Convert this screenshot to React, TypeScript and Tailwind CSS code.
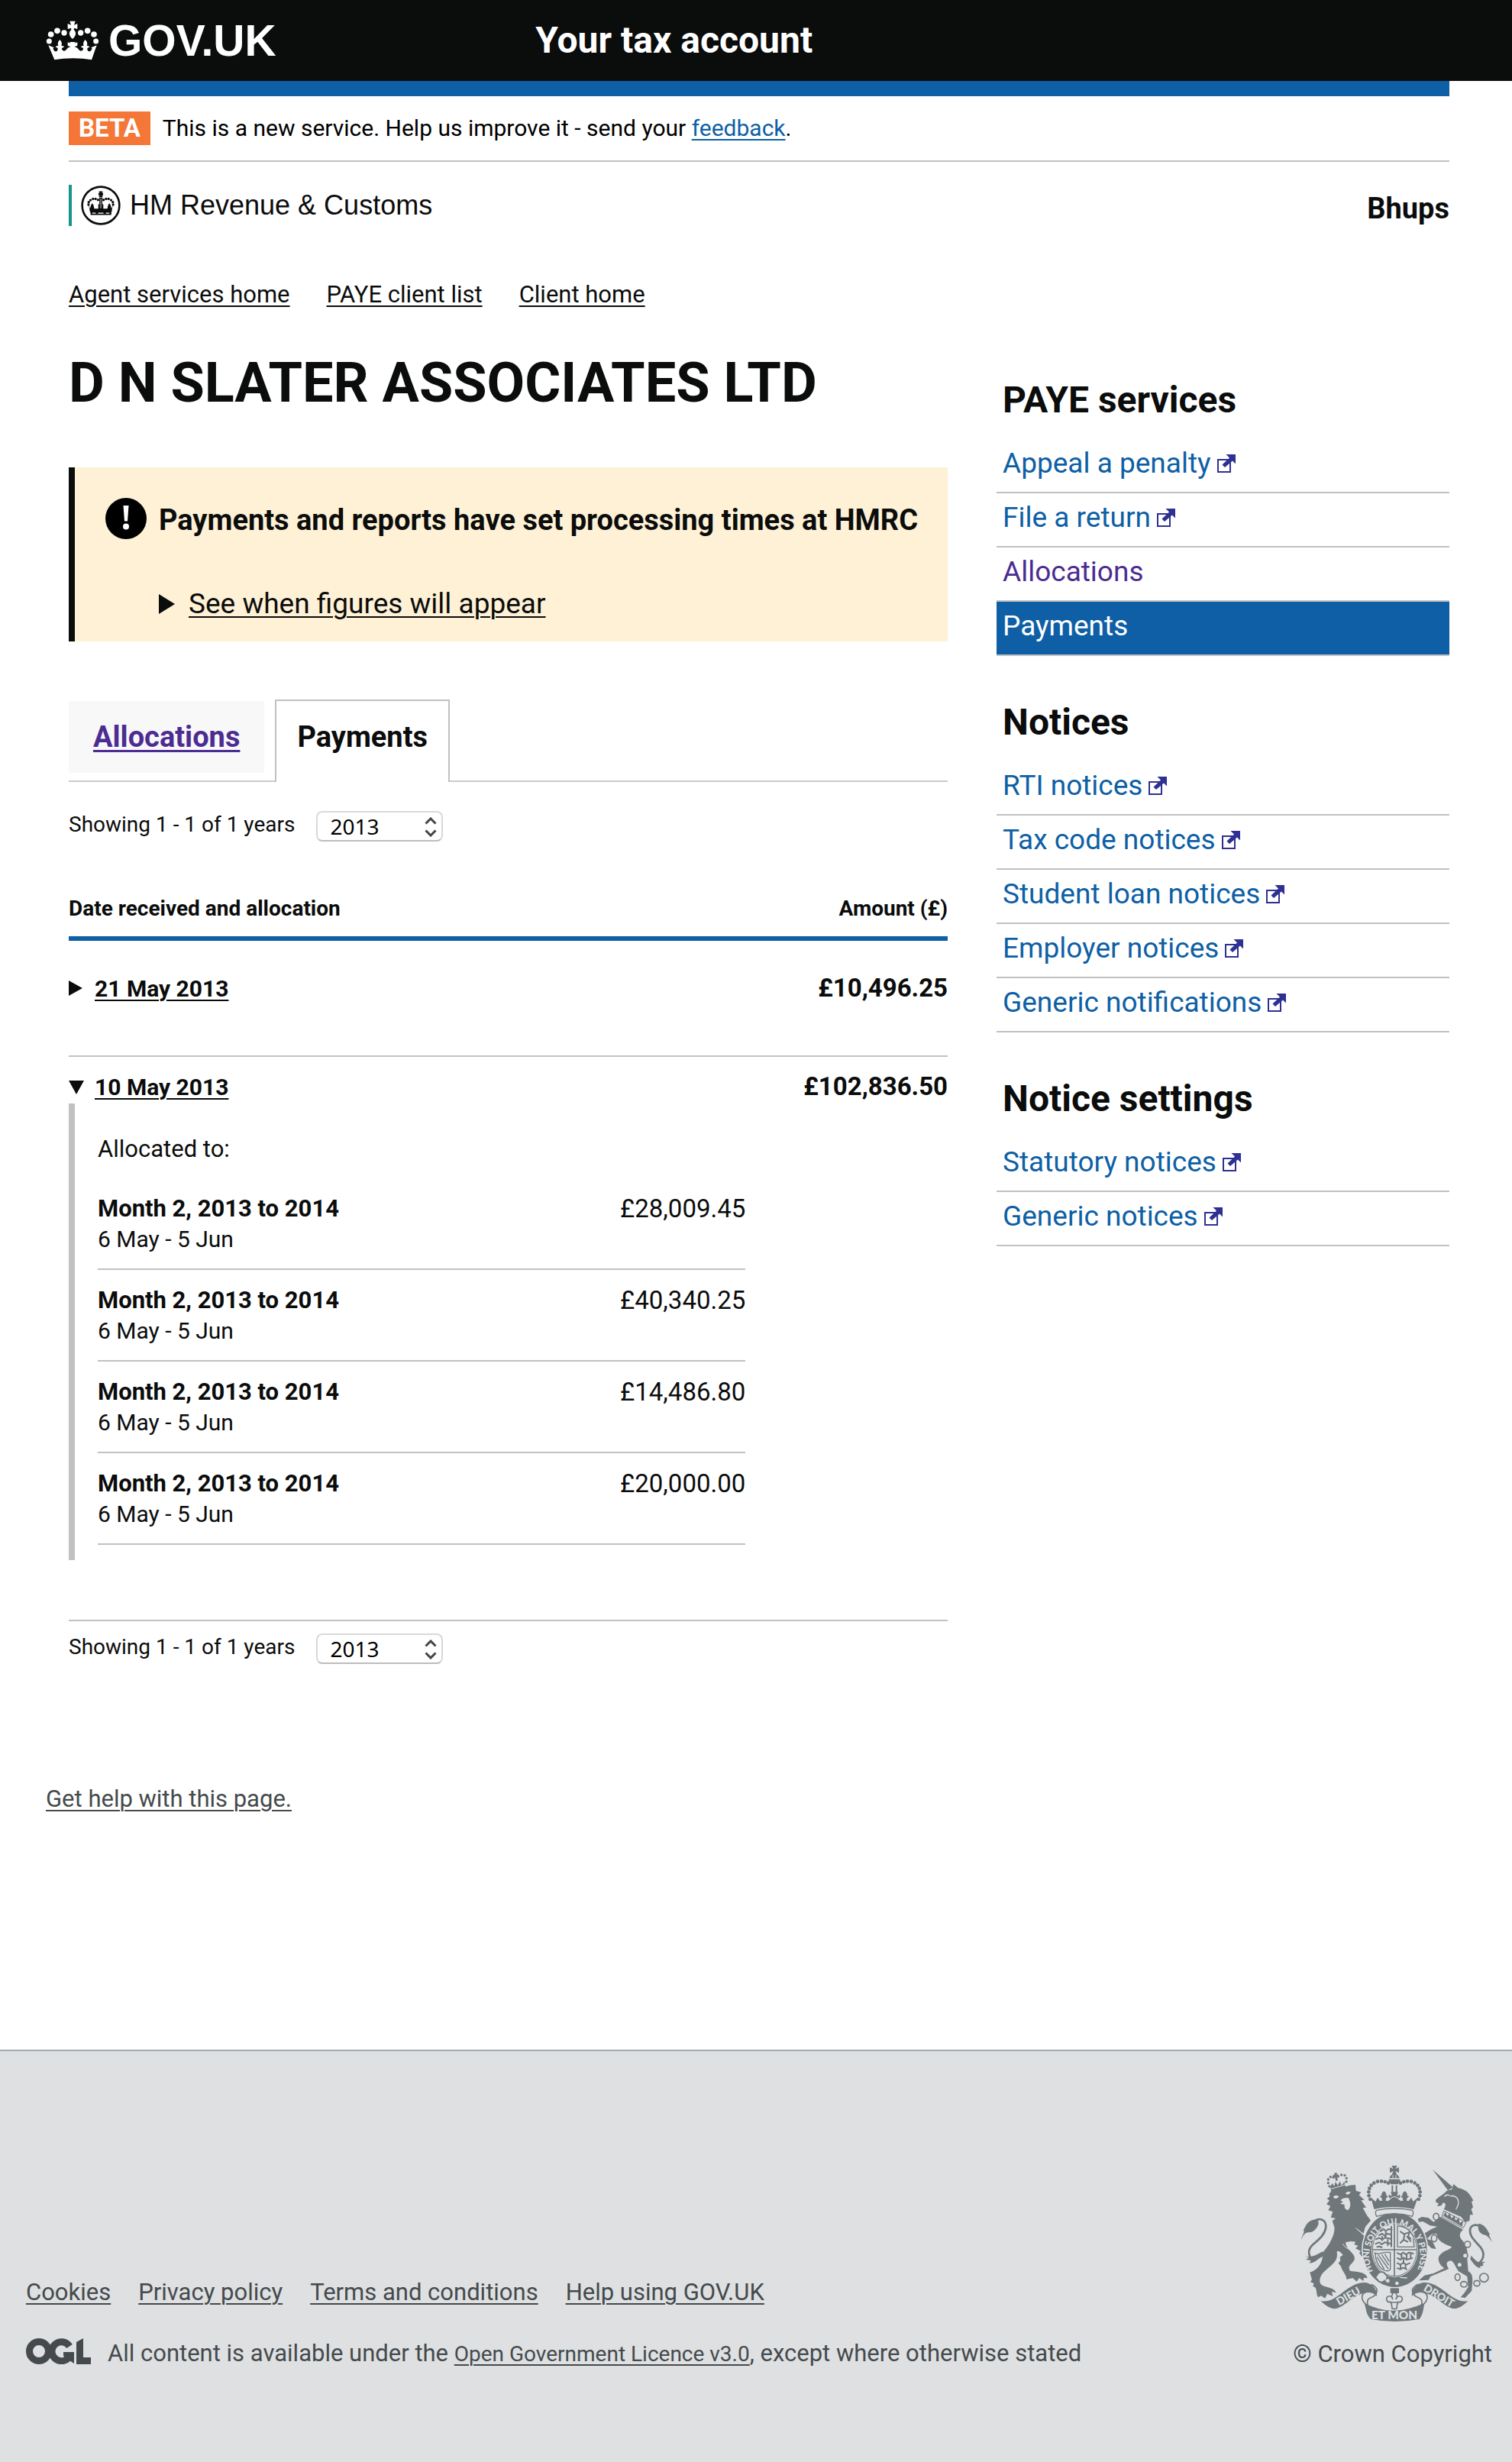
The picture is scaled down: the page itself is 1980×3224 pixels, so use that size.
import React from "react";

type NavItem = { label: string; external?: boolean; visited?: boolean; current?: boolean };

const SERVICE_GROUPS: { title: string; items: NavItem[] }[] = [
  {
    title: "PAYE services",
    items: [
      { label: "Appeal a penalty", external: true },
      { label: "File a return", external: true },
      { label: "Allocations", visited: true },
      { label: "Payments", current: true },
    ],
  },
  {
    title: "Notices",
    items: [
      { label: "RTI notices", external: true },
      { label: "Tax code notices", external: true },
      { label: "Student loan notices", external: true },
      { label: "Employer notices", external: true },
      { label: "Generic notifications", external: true },
    ],
  },
  {
    title: "Notice settings",
    items: [
      { label: "Statutory notices", external: true },
      { label: "Generic notices", external: true },
    ],
  },
];

const ALLOCATIONS = ["£28,009.45", "£40,340.25", "£14,486.80", "£20,000.00"];

function HeaderCrown() {
  return (
    <svg viewBox="60 46 210 156" className="h-[52px] w-[70px]" fill="#fff" aria-hidden="true">
      <circle cx="73" cy="127" r="10.5" />
      <circle cx="80" cy="100" r="11.5" />
      <circle cx="105" cy="86" r="11.5" />
      <circle cx="132" cy="94" r="11" />
      <circle cx="197" cy="94" r="11" />
      <circle cx="224" cy="86" r="11.5" />
      <circle cx="249" cy="100" r="11.5" />
      <circle cx="257" cy="127" r="10.5" />
      <path d="M154 48h22l-5 15 13-5v21l-13-4-1 7c11 9 10 24-5 36-15-12-16-27-5-36l-1-7-13 4V58l13 5z" />
      <path d="M70 143l22 9-4 4c5 12 14 14 18 6 3-7 0-12-8-11 3-7 9-7 11-5-4-11-1-18 6-25 7 7 10 14 6 25 3-2 9-1 11 5-8-1-11 4-8 10 5 7 14 5 22-8l11-4-11-5v-13l11 4-4-5h24l-4 5 11-4v13l-11 5 11 4c8 13 17 15 22 8 3-6 0-11-8-10 2-6 8-7 11-5-4-11-1-18 6-25 7 7 10 14 6 25 2-2 8-2 11 5-8-1-11 4-8 11 4 8 13 6 18-6l-4-4 22-9-20 57c-44-8-102-8-146 0z" />
      <path d="M118 171l10-8 2 10zM212 171l-10-8-2 10z" />
    </svg>
  );
}

function DepartmentCrest() {
  const pearls = [
    [107, 414], [108, 404], [115, 396], [125, 391], [135, 391], [145, 395],
    [167, 395], [177, 391], [187, 391], [197, 396], [204, 404], [205, 414],
  ];
  return (
    <svg viewBox="77 339 158 156" className="h-[52px] w-[52px]" aria-hidden="true">
      <circle cx="156" cy="417" r="74" fill="none" stroke="#0b0c0c" strokeWidth="8" />
      <g fill="#0b0c0c">
        {pearls.map(([x, y]) => (
          <circle key={x + "-" + y} cx={x} cy={y} r="5" />
        ))}
        <path d="M148 361h16l-4 7 5-2v12l-5-2 4 8h-16l4-8-5 2v-12l5 2z" />
        <rect x="150" y="386" width="12" height="42" />
        <path d="M107 410l6 20 4-14 5-8 5 8 3 14h16v-16l4-4h12l4 4v16h16l3-14 5-8 5 8 4 14 6-20-6 33h-86z" />
        <rect x="115" y="440" width="83" height="15" rx="2" />
      </g>
      <path d="M154 390v38M158 390v38" stroke="#fff" strokeWidth="1.5" />
      <path d="M122 448h14M145 448h22M176 448h14" stroke="#fff" strokeWidth="4" />
    </svg>
  );
}

function ExternalIcon() {
  return (
    <svg viewBox="0 0 24 24" className="ml-2 inline-block h-6 w-6 align-baseline" aria-hidden="true">
      <path d="M1 7h16v16H1z" fill="none" stroke="#2e3192" strokeWidth="2" />
      <path d="M11.500 0H24v12.500l-4-4-10 8.500-3.500-3.500L16 4.500z" fill="#2e3192" />
    </svg>
  );
}

function OglLogo() {
  return (
    <svg viewBox="0 0 85 34" className="h-[34px] w-[85px] shrink-0" role="img" aria-label="OGL">
      <circle cx="17" cy="17" r="12.500" fill="none" stroke="#454a4c" strokeWidth="9" />
      <path d="M57 10.500A12.500 12.500 0 1 0 58 22" fill="none" stroke="#454a4c" strokeWidth="9" />
      <path d="M49 18h14v15l-6-4-8-6z" fill="#454a4c" />
      <path d="M66 5l9-5v25h10v9H66z" fill="#454a4c" />
    </svg>
  );
}

function RoyalArms() {
  const ink = "#6f777b";
  const paper = "#dee0e2";
  const crownPearls = [
    [343, 237], [338, 223], [337, 208], [340, 194], [347, 182], [358, 173], [372, 167], [387, 166], [401, 168], [414, 173],
    [533, 237], [538, 223], [539, 208], [536, 194], [529, 182], [518, 173], [504, 167], [489, 166], [475, 168], [462, 173],
  ];
  const lionPearls = [
    [183, 186], [178, 173], [178, 159], [187, 149], [198, 151], [217, 147], [230, 141], [243, 143], [250, 154], [249, 168],
  ];
  return (
    <svg viewBox="72 105 750 612" className="h-[204px] w-[250px]" role="img" aria-label="Royal coat of arms">
      {/* lion */}
      <path d="M122 480C98 460 95 436 118 415C150 388 166 372 169 345C169 312 140 308 118 326" fill="none" stroke={ink} strokeWidth="8" />
      <path d="M72 396c4-22 14-26 9-40 6-4 9-30 36-38 18-4 26 4 22 18-8 22-24 32-38 31-14 0-22 12-29 29zM88 460c16 6 30 4 68-18l6 18c-22 6-34 28-58 28l6-10-20-5 12-6z" fill={ink} />
      <path d="M182 215L190 205 262 182 285 180 287 203 307 210 299 220 320 240 307 241 327 269 314 271 330 300 345 320 324 345 316 372 290 352 334 396 348 440 345 466 322 462 318 452 310 462 300 448 306 440 285 430 296 420 280 414 286 404 268 402 246 406C248 440 290 450 280 476C270 494 252 498 264 518C292 522 326 522 332 546L318 545 316 558 300 546 290 560 274 546 250 552C250 530 232 520 228 500L218 488 226 478 224 464 236 456C224 440 212 436 212 446C222 500 142 510 145 560C148 588 200 576 209 604L192 600 196 618 174 608 166 626 150 616 138 622C130 606 134 596 128 584L118 578 122 568 108 562 114 552 106 524C140 515 160 478 156 446C180 420 206 376 202 346L194 322 207 312 188 308 196 286 178 280 187 264 171 256 183 242 173 234 184 226Z" fill={ink} />
      <path d="M198 226q12-8 22 0-6 12-20 6zM246 212q8-8 20-4-4 12-16 10zM226 240q14-12 32-8l6 16q4 22-10 32-14-4-12-22l-18-4 12-6z" fill={paper} />
      <path d="M286 350l40 32M236 412c6 14 22 22 40 26" fill="none" stroke={paper} strokeWidth="3" />
      <g fill={ink}>
        {lionPearls.map(([x, y]) => (
          <circle key={x + "-" + y} cx={x} cy={y} r="5" />
        ))}
        <path d="M202 134l10-2 0 8 6-1 2 9-7 1 3 14-8 2-4-15-7 2-2-9 7-2z" />
        <path d="M186 188l8-14 8 12 4-18 10 14 8-16 6 16 12-14 2 16 8 4-2 8-58 18z" />
      </g>
      <path d="M190 196l60-18" stroke={paper} strokeWidth="3" />

      {/* unicorn */}
      <path d="M758 494C790 480 796 450 776 425C750 395 730 380 736 352C744 332 768 336 785 346" fill="none" stroke={ink} strokeWidth="8" />
      <path d="M822 406c-6-20-14-22-10-34-8-10-14-34-42-40-8 22 2 38 18 44 14 2 24 14 34 30zM800 480c-8 6-14 2-14 2-14 6-26 2-46-24l-4 14c14 18 18 30 40 36l-2-8 14-2-4-8z" fill={ink} />
      <path d="M588 120L668 190 648 202Z" fill={ink} />
      <path d="M600 240C612 226 626 222 644 203L664 198 670 177 688 192C720 198 734 214 748 242L741 246 747 268 740 276 747 298 735 298 733 322 716 326 700 306 632 276C642 262 640 252 630 250L622 262 606 264 612 252 602 250Z" fill={ink} />
      <path d="M634 226q12-10 20-4M656 224c30-4 44 20 24 52" fill="none" stroke={paper} strokeWidth="4" />
      <path d="M632 282l88 46-12 22-84-44z" fill={paper} stroke={ink} strokeWidth="3" />
      <path d="M630 302l8-16 8 16 10-10 6 20 12-12 4 20 14-10 2 20 14-8-4 22z" fill={ink} />
      <path d="M618 306L708 356C688 372 694 388 708 402C728 430 726 452 724 470L728 520C752 530 744 566 742 596L716 624 698 622 712 606 728 582 724 540 690 520C676 500 672 482 660 478C640 480 640 494 652 510L580 540 572 554 534 556 556 536 592 528 634 508C610 490 604 466 620 452C640 434 654 438 664 424C640 414 606 404 604 372L584 374 566 392 586 400 602 432 584 430 562 408 546 384 558 370 584 354 606 344 578 340 550 324 534 326 530 314 546 306 572 310 592 326Z" fill={ink} />
      <g fill={paper} stroke={ink} strokeWidth="5">
        <ellipse cx="602" cy="305" rx="11" ry="13" />
        <ellipse cx="594" cy="390" rx="11" ry="14" />
        <ellipse cx="725" cy="414" rx="12" ry="12" />
        <ellipse cx="716" cy="458" rx="10" ry="10" />
        <ellipse cx="694" cy="494" rx="10" ry="10" />
        <ellipse cx="686" cy="543" rx="10" ry="13" />
        <ellipse cx="711" cy="571" rx="13" ry="11" />
        <ellipse cx="762" cy="567" rx="12" ry="11" />
        <circle cx="790" cy="545" r="17" />
      </g>

      {/* garter and shield */}
      <ellipse cx="440" cy="436" rx="131" ry="150" fill={paper} />
      <ellipse cx="440" cy="436" rx="126" ry="146" fill={ink} />
      <ellipse cx="439" cy="436" rx="91" ry="107" fill={paper} />
      <ellipse cx="439" cy="436" rx="87" ry="103" fill="none" stroke={ink} strokeWidth="3" />
      <path d="M438 332v208M352 435h174" stroke={ink} strokeWidth="5" />
      <g fill="none" stroke={ink} strokeWidth="6" strokeLinecap="round" strokeLinejoin="round">
        <path d="M384 362l12-8 8 8 10-8 14 2M378 378l12-6 10 8 10-8 16 4M366 394l12-6 12 8 10-8 24 4M364 412l14-6 10 8 12-8 24 6M370 424l10-2 8 4M404 366v18M390 384v14M412 396v22M426 344v78" />
        <path d="M452 342c30 0 50 20 62 44M450 342v82M450 424h66l-4-32" strokeWidth="4" />
        <path d="M462 364l14 10 22-8-6 16 10 10M478 376l-4 20 16 8M474 396l-12 12M488 384l14 18" />
        <path d="M450 448l12 6 10-8 12 8 12-8 16 4M450 468l12 6 12-8 12 8 22-6M450 488l12 6 10-8 12 8 14-6M450 508l12 4 10-6 14 6M466 454v14M486 456v14M474 474v14M462 494v14M482 494v12M502 452v12" />
      </g>
      <path d="M362 448c14 10 36-8 60-2v66c-16 16-46-2-56-40zM374 454l40 56M388 454l28 42M400 452l18 30M370 464l28 48" fill="none" stroke={ink} strokeWidth="4" />
      <path id="garter-path" d="M354 520A100 121 0 1 1 522 526" fill="none" />
      <text fill={paper} fontSize="34" fontWeight="900" fontFamily="Lato, sans-serif">
        <textPath href="#garter-path">HONI SOIT QUI MAL Y PENSE</textPath>
      </text>
      <g fill={paper} stroke={ink} strokeWidth="5">
        <path d="M370 536c4-16 28-18 32-4 12 4 8 22-2 22-4 12-26 10-28-2-8-2-10-14-2-16z" />
      </g>
      <circle cx="412" cy="557" r="7" fill={paper} />
      <circle cx="448" cy="567" r="7" fill={paper} />
      <path d="M392 540l12 16M460 544l28 2" stroke={paper} strokeWidth="4" />

      {/* crown */}
      <path d="M356 238h164l-8 44 6 22q-80-22-160 0l6-22z" fill={paper} />
      <g fill={ink}>
        {crownPearls.map(([x, y]) => (
          <circle key={x + "-" + y} cx={x} cy={y} r="7" />
        ))}
        <path d="M427 105h22l-7 13 14-7v22l-14-7 6 14h-20l6-14-14 7v-22l14 7zM418 154q4-15 20-15t20 15zM416 158h44v8l-8 12h-28l-8-12z" />
        <path d="M346 230l18 16 8-16 10 14 8-2-2-10-8-6 8-4c-2-8 4-14 9-17 5 3 11 9 9 17l8 4-8 6-2 10 8 2 12-8-8-6v-12l12 6-4-16h28l-4 16 12-6v12l-8 6 12 8 8-2-2-10-8-6 8-4c-2-8 4-14 9-17 5 3 11 9 9 17l8 4-8 6-2 10 8 2 10-14 8 16 18-16-16 46c-50-12-106-12-156 0z" />
      </g>
      <path d="M430 182v34M446 182v34" stroke={ink} strokeWidth="6" />
      <path d="M432 142v12M444 142v12M416 236l22-10 22 10" fill="none" stroke={paper} strokeWidth="3" />
      <path d="M368 280q70-14 140 0 8 8 0 24-70-22-140 0-8-16 0-24z" fill={paper} stroke={ink} strokeWidth="4" />

      {/* rose pendant */}
      <path d="M422 586h34v20h-34z" fill={ink} />
      <path d="M438 600c12 10 12 22 6 30 4-18 26-16 25 0-2 10-10 12-16 10l-4 10-2 16-9 2-9-2-2-16-4-10c-6 2-14 0-16-10-1-16 21-18 25 0-6-8-6-20 6-30zM424 642h28" fill={paper} stroke={ink} strokeWidth="5" />

      {/* motto ribbons */}
      <g fill={paper} stroke={ink} strokeWidth="5">
        <path d="M350 572c34 18 18 44-6 52-18 8-10 20-12 30-22-14-30-42-8-52 12-4 18-6 26-30z" />
        <path d="M528 572c-34 18-18 44 6 52 18 8 10 20 12 30 22-14 30-42 8-52-12-4-18-6-26-30z" />
      </g>
      <path d="M148 636C210 650 250 566 316 564C348 562 372 590 369 618C356 604 338 600 318 606C270 614 240 666 200 667C178 664 162 648 148 636Z" fill={ink} />
      <path d="M728 636C666 650 626 566 560 564C528 562 504 590 507 618C520 604 538 600 558 606C606 614 636 666 676 667C698 664 714 648 728 636Z" fill={ink} />
      <path d="M320 644Q380 676 438 674T556 644L552 668Q548 692 536 708Q438 726 346 708Q330 694 326 668Z" fill={ink} />
      <g fill={paper} fontFamily="Lato, sans-serif" fontWeight="900" textAnchor="middle">
        <text x="264" y="630" fontSize="42" transform="rotate(-30 264 630)">DIEU</text>
        <text x="438" y="708" fontSize="46">ET MON</text>
        <text x="606" y="628" fontSize="42" transform="rotate(31 606 628)">DROIT</text>
      </g>
    </svg>
  );
}

function YearPicker({ id }: { id: string }) {
  return (
    <div className="flex items-center gap-7">
      <label htmlFor={id} className="pb-1 text-[28px] leading-9">
        Showing 1 - 1 of 1 years
      </label>
      <div className="relative">
        <select
          id={id}
          defaultValue="2013"
          className="block h-10 w-[166px] appearance-none rounded-lg border-2 border-[#d9d9d9] border-b-[#bdbdbd] bg-white pl-4 font-['Noto_Sans',sans-serif] text-[28px] leading-9 text-black"
        >
          <option>2013</option>
        </select>
        <svg viewBox="0 0 16 26" className="pointer-events-none absolute top-2 right-2 h-[26px] w-4" aria-hidden="true">
          <path d="M1.500 8.500L8 2l6.500 6.500M1.500 17.500L8 24l6.500-6.500" fill="none" stroke="#444" strokeWidth="3" />
        </svg>
      </div>
    </div>
  );
}

function Marker({ open = false }: { open?: boolean }) {
  return (
    <svg viewBox="0 0 20 20" className="h-5 w-5 shrink-0" fill="#0b0c0c" aria-hidden="true">
      <path d={open ? "M0 2h20L10 20z" : "M0 0l18 10L0 20z"} />
    </svg>
  );
}

function ServiceNav() {
  return (
    <nav aria-label="PAYE" className="flex flex-col gap-[59px] pt-[34px]">
      {SERVICE_GROUPS.map((group) => (
        <section key={group.title}>
          <h2 className="pl-2 text-[48px] leading-[56px] font-bold">{group.title}</h2>
          <ul className="mt-[23px] text-[37px] leading-[44px]">
            {group.items.map((item) => (
              <li key={item.label} className="border-b-2 border-[#bfc1c3]">
                <a
                  href="#"
                  aria-current={item.current ? "page" : undefined}
                  className={
                    "block h-[69px] pt-[10px] pl-2 " +
                    (item.current ? "bg-[#0e5fa5] text-white" : item.visited ? "text-[#4c2c92]" : "text-[#0e5fa5]")
                  }
                >
                  {item.label}
                  {item.external && <ExternalIcon />}
                </a>
              </li>
            ))}
          </ul>
        </section>
      ))}
    </nav>
  );
}

function PaymentsTable() {
  return (
    <table className="mt-[68px] w-full table-fixed border-collapse">
      <thead>
        <tr className="border-b-[6px] border-[#0e5fa5] text-[28px] leading-10">
          <th scope="col" className="w-[77%] pb-4 text-left font-bold">Date received and allocation</th>
          <th scope="col" className="pb-4 text-right font-bold">Amount (£)</th>
        </tr>
      </thead>
      <tbody className="align-top">
        <tr className="border-b-2 border-[#bfc1c3]">
          <td className="pt-10 pb-[66px]">
            <details>
              <summary className="flex h-11 cursor-pointer list-none items-center gap-[14px]">
                <Marker />
                <span className="text-[30px] font-bold underline decoration-2 underline-offset-4">21 May 2013</span>
              </summary>
            </details>
          </td>
          <td className="pt-10 text-right text-[33px] leading-[44px] font-bold">£10,496.25</td>
        </tr>
        <tr className="border-b-2 border-[#bfc1c3]">
          <td className="pt-[17px] pb-[78px]">
            <details open>
              <summary className="flex h-11 cursor-pointer list-none items-center gap-[14px]">
                <Marker open />
                <span className="text-[30px] font-bold underline decoration-2 underline-offset-4">10 May 2013</span>
              </summary>
              <div className="border-l-8 border-[#bfc1c3] pt-10 pb-5 pl-[30px]">
                <p className="text-[31px] leading-10">Allocated to:</p>
                <ul className="mt-[18px]">
                  {ALLOCATIONS.map((amount) => (
                    <li key={amount} className="flex justify-between border-b-2 border-[#bfc1c3] pt-5 pb-[18px] leading-10">
                      <div>
                        <p className="text-[31px] font-bold">Month 2, 2013 to 2014</p>
                        <p className="text-[30px]">6 May - 5 Jun</p>
                      </div>
                      <p className="text-[33px]">{amount}</p>
                    </li>
                  ))}
                </ul>
              </div>
            </details>
          </td>
          <td className="pt-[17px] text-right text-[33px] leading-[44px] font-bold">£102,836.50</td>
        </tr>
      </tbody>
    </table>
  );
}

export default function App() {
  return (
    <div className="flex min-h-screen flex-col bg-white font-[Roboto,sans-serif] text-[#0b0c0c]">
      <header className="grid h-[106px] grid-cols-[1fr_2fr] items-center gap-8 bg-[#0b0c0c] px-[60px] text-white">
        <a href="#" className="flex items-center gap-3 font-['Liberation_Sans',sans-serif] text-[57px] leading-none font-bold">
          <HeaderCrown />
          GOV.UK
        </a>
        <a href="#" className="text-[48px] leading-[56px] font-bold">Your tax account</a>
      </header>

      <main className="grow">
        <div className="pr-[82px] pl-[90px]">
          <div className="h-5 bg-[#0e5fa5]" />
          <div className="flex items-center gap-4 border-b-2 border-[#bfc1c3] py-5">
            <strong className="bg-[#f47738] px-[13px] text-[33px] leading-[44px] font-bold text-white">BETA</strong>
            <p className="text-[30px] leading-10 text-black">
              This is a new service. Help us improve it - send your{" "}
              <a href="#" className="text-[#0e5fa5] underline decoration-2 underline-offset-4">feedback</a>.
            </p>
          </div>

          <div className="flex items-center justify-between pt-[30px]">
            <div className="flex h-[54px] items-center gap-3 border-l-4 border-[#17958d] pl-3 font-['Liberation_Sans',sans-serif] text-[36px]">
              <DepartmentCrest />
              HM Revenue &amp; Customs
            </div>
            <p className="pt-2 text-[38px] leading-[44px] font-bold">Bhups</p>
          </div>

          <nav aria-label="Breadcrumb" className="mt-[70px] flex gap-12 text-[31px] leading-10">
            <a href="#" className="underline decoration-2 underline-offset-4">Agent services home</a>
            <a href="#" className="underline decoration-2 underline-offset-4">PAYE client list</a>
            <a href="#" className="underline decoration-2 underline-offset-4">Client home</a>
          </nav>

          <div className="mt-14 grid grid-cols-[66fr_34fr] gap-16">
            <div>
              <h1 className="text-[72px] leading-[80px] font-bold">D N SLATER ASSOCIATES LTD</h1>

              <section className="mt-[70px] flex gap-4 border-l-8 border-[#0b0c0c] bg-[#fef1d5] pt-10 pb-[25px] pl-10">
                <svg viewBox="0 0 54 54" className="h-[54px] w-[54px] shrink-0" aria-hidden="true">
                  <circle cx="27" cy="27" r="27" />
                  <path d="M23.500 10h7l-1.500 20.500h-4z" fill="#fff" />
                  <circle cx="27" cy="37.500" r="4" fill="#fff" />
                </svg>
                <div>
                  <h2 className="pt-1 text-[38px] leading-[50px] font-bold">
                    Payments and reports have set processing times at HMRC
                  </h2>
                  <details className="mt-[61px]">
                    <summary className="flex h-12 cursor-pointer list-none items-center gap-[18px]">
                      <svg viewBox="0 0 21 26" className="h-[26px] w-[21px]" fill="#0b0c0c" aria-hidden="true">
                        <path d="M0 0l21 13L0 26z" />
                      </svg>
                      <span className="text-[37px] underline decoration-2 underline-offset-4">See when figures will appear</span>
                    </summary>
                  </details>
                </div>
              </section>

              <nav aria-label="Account views" className="mt-[76px] flex h-[108px] gap-[14px] border-b-2 border-[#c9cbcd] text-[38px] leading-[50px] font-bold">
                <a href="#" className="mt-[2px] h-[94px] bg-[#f8f8f8] px-8 pt-[22px] text-[#4c2c92] underline decoration-[3px] underline-offset-4">
                  Allocations
                </a>
                <a href="#" aria-current="page" className="h-[108px] border-x-2 border-t-2 border-[#bfc1c3] bg-white px-[27px] pt-[22px]">
                  Payments
                </a>
              </nav>

              <div className="mt-[38px]">
                <YearPicker id="year-top" />
              </div>
              <PaymentsTable />
              <div className="mt-4">
                <YearPicker id="year-bottom" />
              </div>
            </div>

            <ServiceNav />
          </div>
        </div>

        <p className="mt-[157px] mb-[303px] pl-[60px] text-[31px] leading-10 text-[#454a4c]">
          <a href="#" className="underline decoration-2 underline-offset-4">Get help with this page.</a>
        </p>
      </main>

      <footer className="flex items-end justify-between border-t-2 border-[#a1acb2] bg-[#dee0e2] pt-[150px] pr-[26px] pb-[121px] pl-[34px] text-[#454a4c]">
        <div>
          <ul className="flex gap-9 text-[31px] leading-10">
            {["Cookies", "Privacy policy", "Terms and conditions", "Help using GOV.UK"].map((label) => (
              <li key={label}>
                <a href="#" className="underline decoration-2 underline-offset-4">{label}</a>
              </li>
            ))}
          </ul>
          <div className="mt-10 flex gap-[22px] text-[31px] leading-10">
            <OglLogo />
            <p>
              All content is available under the{" "}
              <a href="#" className="text-[28px] underline decoration-2 underline-offset-4">Open Government Licence v3.0</a>
              , except where otherwise stated
            </p>
          </div>
        </div>
        <div className="flex flex-col items-end gap-[23px]">
          <RoyalArms />
          <a href="#" className="text-[31px] leading-10">© Crown Copyright</a>
        </div>
      </footer>
    </div>
  );
}
